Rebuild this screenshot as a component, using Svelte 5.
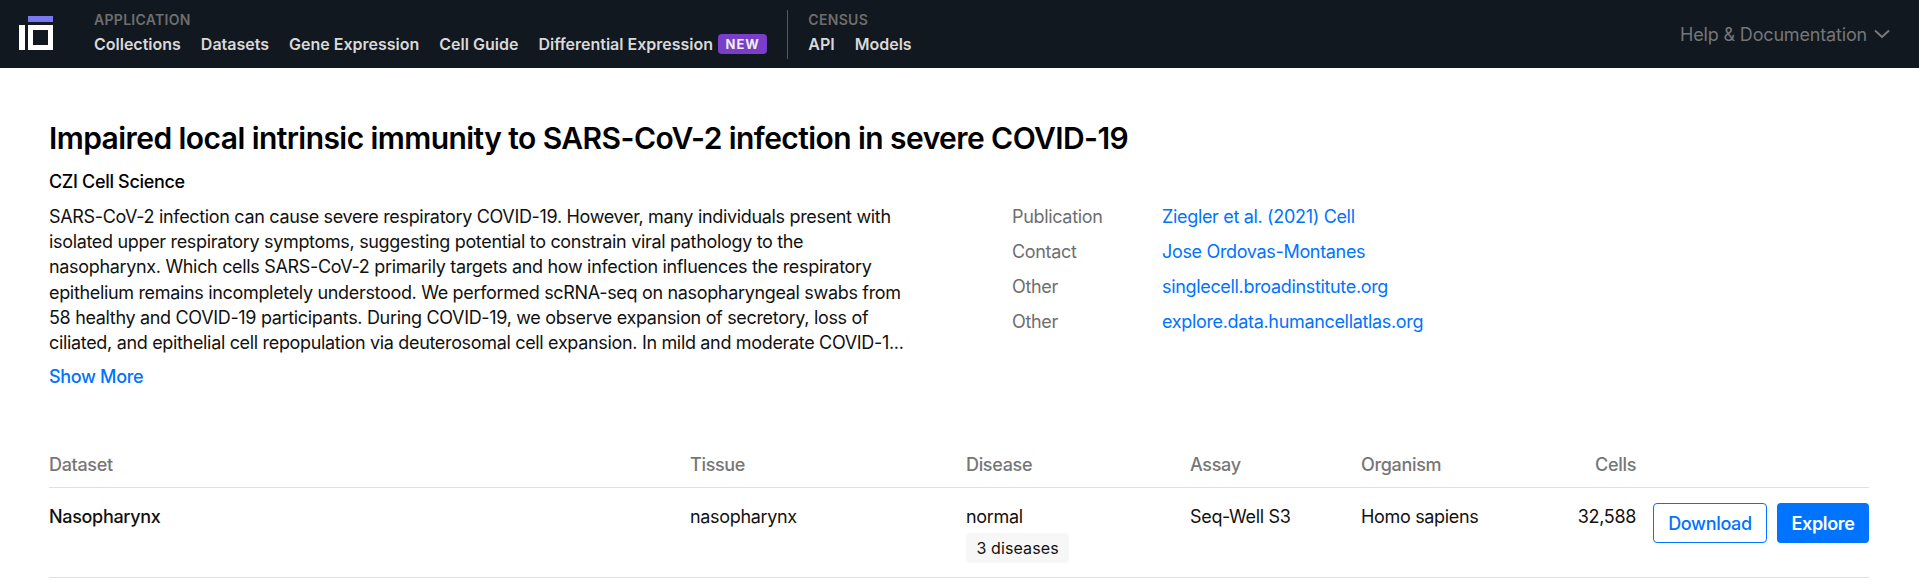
<script>
  const links = [
    ['Publication', 'Ziegler et al. (2021) Cell'],
    ['Contact', 'Jose Ordovas-Montanes'],
    ['Other', 'singlecell.broadinstitute.org'],
    ['Other', 'explore.data.humancellatlas.org']
  ];
</script>

<header class="top">
  <svg class="logo" width="34" height="34" viewBox="0 0 34 34">
    <rect x="9" y="0" width="25" height="6" fill="#7a78f0" />
    <rect x="0" y="9" width="6" height="25" fill="#fff" />
    <rect x="11.5" y="11.5" width="20" height="20" fill="none" stroke="#fff" stroke-width="5" />
  </svg>
  <nav class="group app">
    <div class="label">APPLICATION</div>
    <div class="items">
      <a>Collections</a><a>Datasets</a><a>Gene Expression</a><a>Cell Guide</a>
      <a class="withtag">Differential Expression<span class="tag">NEW</span></a>
    </div>
  </nav>
  <div class="sep"></div>
  <nav class="group">
    <div class="label">CENSUS</div>
    <div class="items"><a>API</a><a>Models</a></div>
  </nav>
  <div class="help">
    Help &amp; Documentation
    <svg width="16" height="10" viewBox="0 0 16 10"><path d="M1 1.5 L8 8 L15 1.5" fill="none" stroke="#7d7d7d" stroke-width="1.8" /></svg>
  </div>
</header>

<main>
  <h1>Impaired local intrinsic immunity to SARS-CoV-2 infection in severe COVID-19</h1>
  <div class="owner">CZI Cell Science</div>
  <section class="info">
    <div class="desc">
      <p>SARS-CoV-2 infection can cause severe respiratory COVID-19. However, many individuals present with isolated upper respiratory symptoms, suggesting potential to constrain viral pathology to the nasopharynx. Which cells SARS-CoV-2 primarily targets and how infection influences the respiratory epithelium remains incompletely understood. We performed scRNA-seq on nasopharyngeal swabs from 58 healthy and COVID-19 participants. During COVID-19, we observe expansion of secretory, loss of ciliated, and epithelial cell repopulation via deuterosomal cell expansion. In mild and moderate COVID-1...</p>
      <a class="more">Show More</a>
    </div>
    <dl class="links">
      {#each links as [k, v]}
        <dt>{k}</dt><dd><a>{v}</a></dd>
      {/each}
    </dl>
  </section>

  <table>
    <thead>
      <tr>
        <th class="c1">Dataset</th><th class="c2">Tissue</th><th class="c3">Disease</th><th class="c4">Assay</th><th class="c5">Organism</th><th class="c6 num">Cells</th><th></th>
      </tr>
    </thead>
    <tbody>
      <tr>
        <td class="name">Nasopharynx</td>
        <td>nasopharynx</td>
        <td>normal<span class="chip">3 diseases</span></td>
        <td>Seq-Well S3</td>
        <td>Homo sapiens</td>
        <td class="num">32,588</td>
        <td class="actions"><button class="outline">Download</button><button class="solid">Explore</button></td>
      </tr>
    </tbody>
  </table>
</main>

<style>
  :global(body) { margin: 0; background: #fff; font-family: Inter, "Liberation Sans", sans-serif; color: #000; }
  .top { height: 68px; background: #111820; display: flex; align-items: center; padding: 0 29px 0 19px; box-sizing: border-box; }
  .logo { flex: none; margin: 0 41px 2px 0; }
  .group { display: flex; flex-direction: column; gap: 4px; }
  .label { font-size: 14px; line-height: 16px; font-weight: 600; color: #6e6e6e; letter-spacing: 0.3px; }
  .items { display: flex; gap: 20px; font-size: 16px; line-height: 24px; font-weight: 600; color: #d9d9d9; }
  .withtag { display: flex; align-items: center; gap: 5px; }
  .tag { background: #7a3fc9; color: #efefef; font-size: 13px; line-height: 20px; height: 20px; padding: 0 7.5px; border-radius: 4px; letter-spacing: 1px; font-weight: 700; }
  .sep { width: 1px; height: 49px; background: #555a5e; margin: 0 20px; }
  .help { margin-left: auto; display: flex; align-items: center; gap: 7px; color: #767676; font-size: 18px; letter-spacing: -0.17px; }
  main { padding: 0 50px 0 49px; font-size: 18px; letter-spacing: -0.33px; }
  h1 { margin: 0; padding-top: 52px; font-size: 30px; line-height: 36px; font-weight: 600; letter-spacing: -0.57px; }
  .owner { margin-top: 13px; line-height: 25px; font-weight: 500; }
  .info { display: flex; margin-top: 10px; }
  .desc { width: 866px; flex: none; line-height: 25.2px; color: #111; }
  .desc p { margin: 0; }
  .more { display: block; margin-top: 9px; color: #0073ff; font-weight: 500; }
  .links { margin: 0 0 0 97px; display: grid; grid-template-columns: 150px auto; grid-auto-rows: 35.1px; line-height: 25.2px; align-content: start; }
  dt { color: #6e6e6e; }
  dd { margin: 0; }
  dd a { color: #0073ff; }
  table { width: 100%; border-collapse: collapse; margin-top: 63px; table-layout: fixed; }
  th { font-weight: 500; color: #767676; text-align: left; padding: 0; height: 35px; line-height: 25px; border-bottom: 1px solid #e0e0e0; vertical-align: top; }
  td { padding: 16px 0 0; height: 90px; box-sizing: border-box; vertical-align: top; line-height: 25px; border-bottom: 1px solid #e0e0e0; color: #111; }
  .c1 { width: 641px; } .c2 { width: 276px; } .c3 { width: 224px; } .c4 { width: 171px; } .c5 { width: 176px; } .c6 { width: 99px; }
  .num { text-align: right; }
  .name { font-weight: 500; }
  .chip { display: block; width: fit-content; box-sizing: border-box; margin-top: 4px; height: 30px; padding: 0 10.5px; background: #f7f7f7; border-radius: 4px; font-size: 16px; line-height: 30px; letter-spacing: 0.1px; }
  .actions { text-align: right; padding-top: 15px; white-space: nowrap; }
  button { font: inherit; letter-spacing: inherit; font-weight: 500; height: 40px; border-radius: 4px; box-sizing: border-box; cursor: pointer; }
  .outline { width: 114px; background: #fff; color: #0073ff; border: 1px solid #0073ff; margin-right: 10px; }
  .solid { width: 92px; background: #0073ff; color: #fff; border: none; font-weight: 600; }
</style>
